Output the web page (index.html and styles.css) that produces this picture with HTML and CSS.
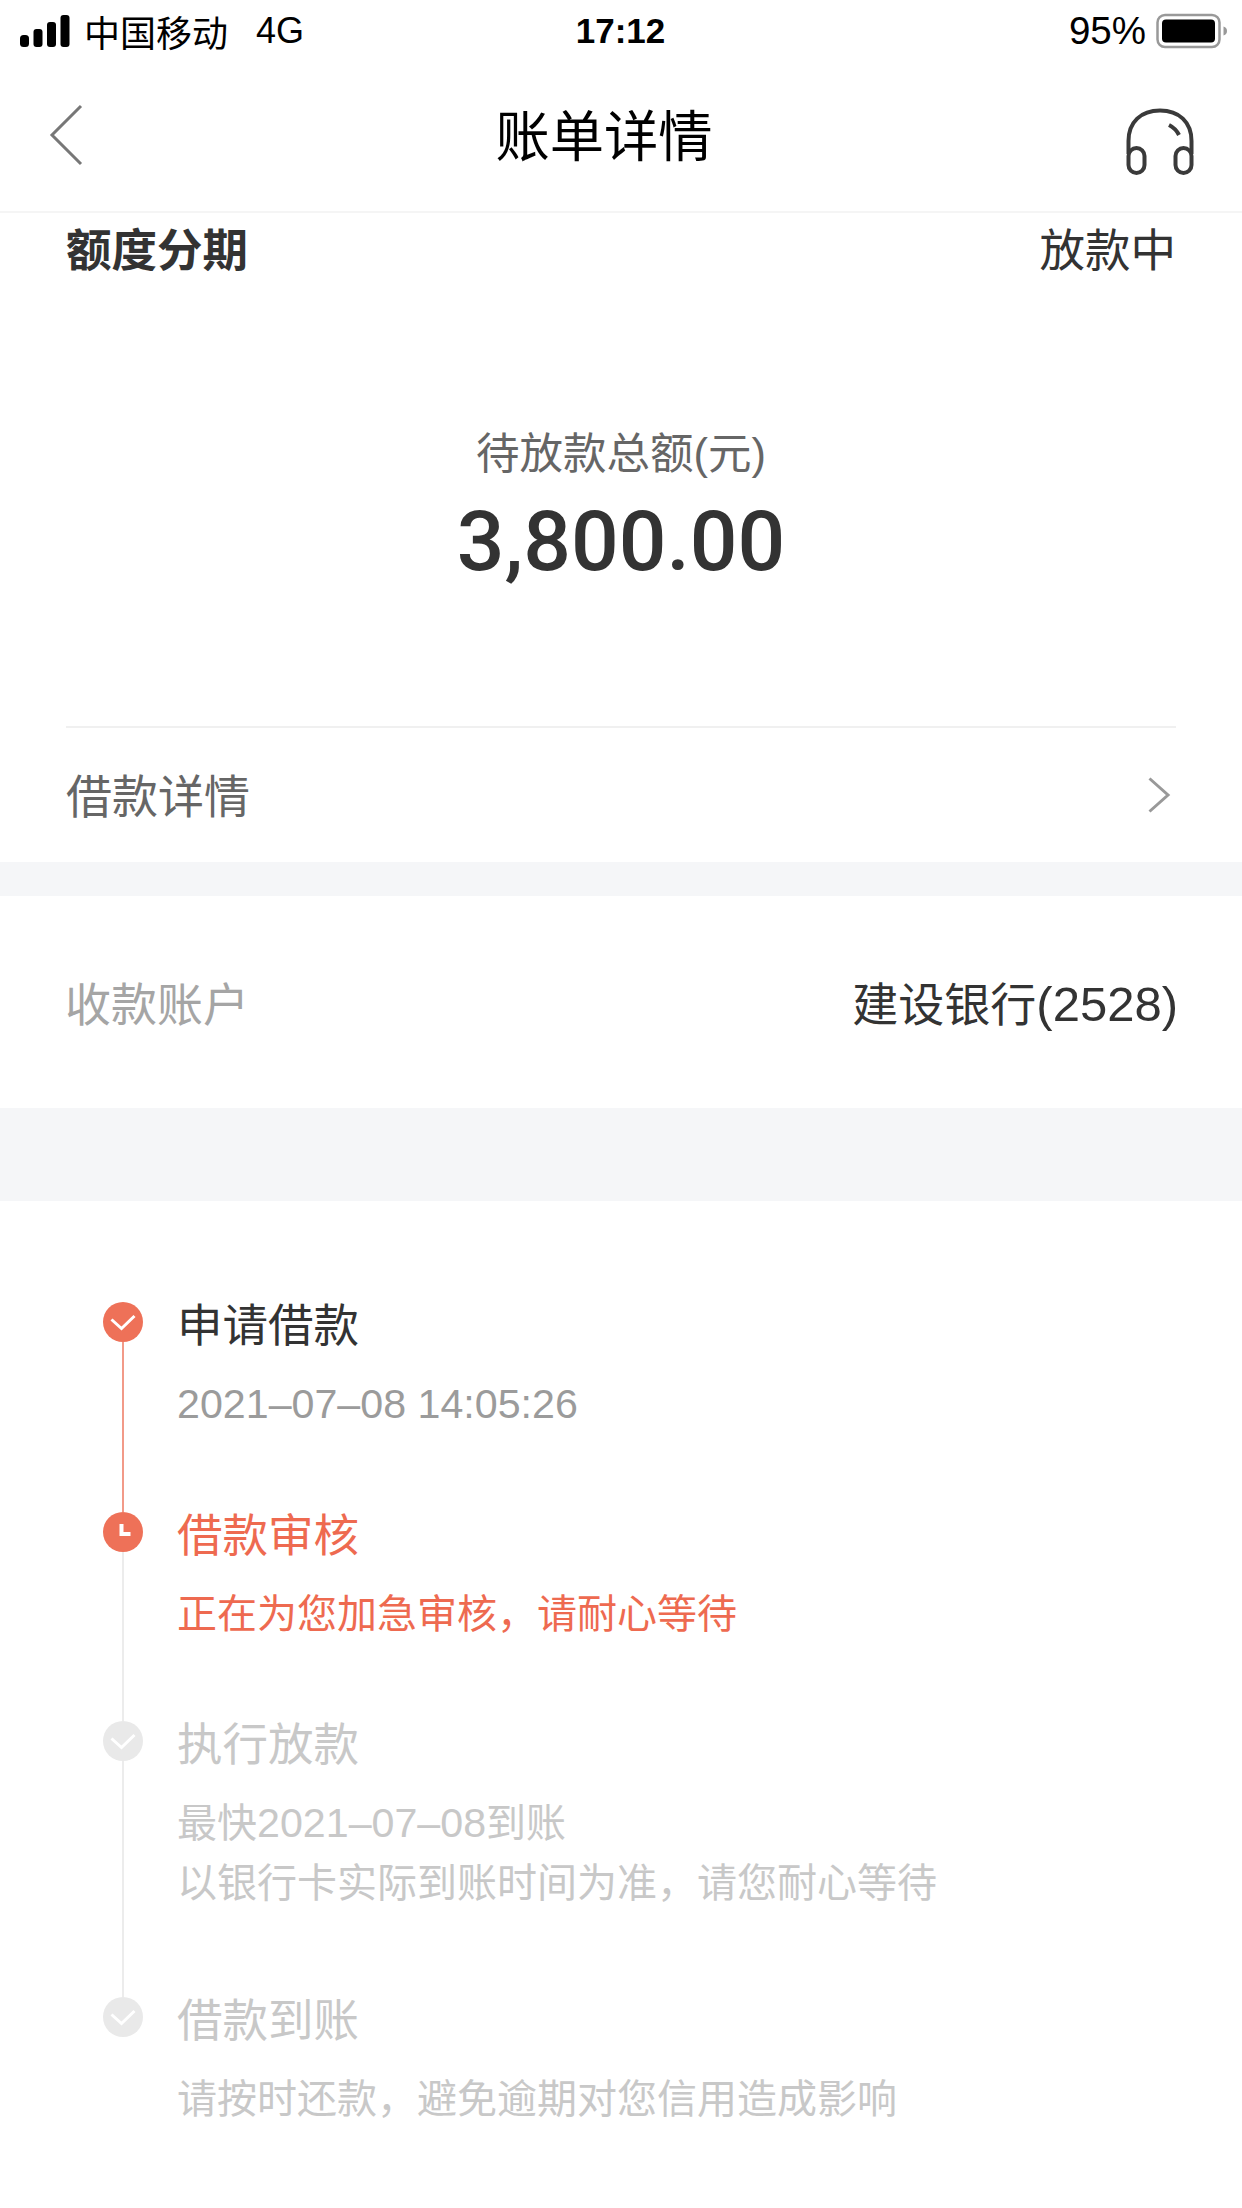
FILE: index.html
```html
<!DOCTYPE html>
<html lang="zh-CN">
<head>
  <meta charset="UTF-8" />
  <title>账单详情</title>
  <link rel="stylesheet" href="styles.css">
</head>
<body>
  <div class="status-bar">
    <div class="status-left">
      <svg class="signal" width="52" height="34" viewBox="0 0 52 34">
        <rect x="1" y="21" width="9" height="12" rx="3.5"/>
        <rect x="14.5" y="15" width="9" height="18" rx="3"/>
        <rect x="28" y="8" width="9" height="25" rx="3"/>
        <rect x="41.5" y="1" width="9" height="32" rx="3"/>
      </svg>
      <span class="carrier">中国移动</span>
      <span class="network">4G</span>
    </div>
    <div class="status-time">17:12</div>
    <div class="status-right">
      <span class="battery-text">95%</span>
      <svg class="battery" width="72" height="36" viewBox="0 0 72 36">
        <rect x="1.5" y="2" width="62" height="32" rx="7.5" fill="none" stroke="#999" stroke-width="2.5"/>
        <rect x="6" y="6.5" width="53" height="23" rx="4" fill="#000"/>
        <path d="M67.500 13.500c2.500 .8 3.500 2.500 3.500 4.500s-1 3.700-3.500 4.500z" fill="#999"/>
      </svg>
    </div>
  </div>

  <div class="nav-bar">
    <svg class="nav-back" width="34" height="62" viewBox="0 0 34 62">
      <path d="M32 2 3 31l29 29" fill="none" stroke="#777" stroke-width="3"/>
    </svg>
    <div class="nav-title">账单详情</div>
    <svg class="nav-service" width="70" height="68" viewBox="0 0 70 68">
      <path d="M3.500 46V33C3.500 14 16 2.500 35 2.500S66.500 14 66.500 33v13" fill="none" stroke="#3a3a3a" stroke-width="4"/>
      <rect x="3.500" y="40" width="16" height="25" rx="8" fill="none" stroke="#3a3a3a" stroke-width="4"/>
      <rect x="50.500" y="40" width="16" height="25" rx="8" fill="none" stroke="#3a3a3a" stroke-width="4"/>
      <path d="M44 17c4 2 8 6 10 10" fill="none" stroke="#3a3a3a" stroke-width="4"/>
    </svg>
  </div>

  <section class="summary">
    <div class="summary-head">
      <span class="summary-type">额度分期</span>
      <span class="summary-state">放款中</span>
    </div>
    <div class="summary-label">待放款总额(元)</div>
    <div class="summary-amount">3,800.00</div>
    <div class="detail-row">
      <span class="detail-label">借款详情</span>
      <svg class="chevron" width="24" height="38" viewBox="0 0 24 38">
        <path d="M2.500 2.500 21 19 2.500 35.500" fill="none" stroke="#999" stroke-width="3"/>
      </svg>
    </div>
  </section>

  <section class="account">
    <span class="account-label">收款账户</span>
    <span class="account-value">建设银行<span class="account-no">(2528)</span></span>
  </section>

  <section class="timeline">
    <div class="step step-done">
      <div class="step-mark">
        <svg class="step-dot" width="40" height="40" viewBox="0 0 40 40">
          <circle cx="20" cy="20" r="20"/>
          <path d="M8.500 17.500 18.500 26.500 31.500 14" fill="none" stroke="#fff" stroke-width="3"/>
        </svg>
        <div class="step-line"></div>
      </div>
      <div class="step-body">
        <div class="step-title">申请借款</div>
        <div class="step-text"><span class="num">2021–07–08 14:05:26</span></div>
      </div>
    </div>

    <div class="step step-active">
      <div class="step-mark">
        <svg class="step-dot" width="40" height="40" viewBox="0 0 40 40">
          <circle cx="20" cy="20" r="20"/>
          <path d="M18.500 12v10h9" fill="none" stroke="#fff" stroke-width="4"/>
        </svg>
        <div class="step-line"></div>
      </div>
      <div class="step-body">
        <div class="step-title">借款审核</div>
        <div class="step-text">正在为您加急审核，请耐心等待</div>
      </div>
    </div>

    <div class="step step-todo step-tall">
      <div class="step-mark">
        <svg class="step-dot" width="40" height="40" viewBox="0 0 40 40">
          <circle cx="20" cy="20" r="20"/>
          <path d="M8.500 17.500 18.500 26.500 31.500 14" fill="none" stroke="#fff" stroke-width="3"/>
        </svg>
        <div class="step-line"></div>
      </div>
      <div class="step-body">
        <div class="step-title">执行放款</div>
        <div class="step-text">最快<span class="num">2021–07–08</span>到账<br>以银行卡实际到账时间为准，请您耐心等待</div>
      </div>
    </div>

    <div class="step step-todo">
      <div class="step-mark">
        <svg class="step-dot" width="40" height="40" viewBox="0 0 40 40">
          <circle cx="20" cy="20" r="20"/>
          <path d="M8.500 17.500 18.500 26.500 31.500 14" fill="none" stroke="#fff" stroke-width="3"/>
        </svg>
      </div>
      <div class="step-body">
        <div class="step-title">借款到账</div>
        <div class="step-text">请按时还款，避免逾期对您信用造成影响</div>
      </div>
    </div>
  </section>
</body>
</html>
```

FILE: styles.css
```css
* {
  box-sizing: border-box;
}

body {
  margin: 0;
  width: 1242px;
  height: 2208px;
  overflow: hidden;
  background-color: #fff;
  font-family: "Liberation Sans", "Noto Sans CJK SC", sans-serif;
  color: #333;
}

.status-bar {
  display: grid;
  grid-template-columns: 1fr auto 1fr;
  align-items: center;
  height: 62px;
  padding: 0 14px 0 19px;
  color: #000;
  font-size: 36px;
}

.status-left {
  display: flex;
  align-items: center;
}

.signal {
  fill: #000;
  margin-right: 13px;
}

.carrier {
  margin-right: 28px;
}

.status-time {
  font-weight: bold;
  font-size: 35px;
  margin-right: 6px;
}

.status-right {
  display: flex;
  align-items: center;
  justify-content: flex-end;
  gap: 10px;
}

.battery-text {
  font-size: 38.500px;
}

.nav-bar {
  display: flex;
  align-items: center;
  justify-content: space-between;
  height: 151px;
  padding: 0 47px 9px 49px;
  border-bottom: 2px solid #f5f5f5;
}

.nav-back {
  margin-top: 6px;
}

.nav-title {
  font-size: 54.300px;
  color: #000;
}

.nav-service {
  margin-top: 20px;
}

.summary {
  padding: 0 66px;
}

.summary-head {
  display: flex;
  justify-content: space-between;
  align-items: center;
  height: 67px;
  font-size: 45.500px;
}

.summary-type {
  font-weight: bold;
}

.summary-label {
  margin-top: 144px;
  text-align: center;
  font-size: 43.500px;
  line-height: 60px;
  color: #666;
}

.summary-amount {
  margin-top: 3px;
  text-align: center;
  font-family: Roboto, "Liberation Sans", sans-serif;
  font-size: 84px;
  line-height: 110px;
  font-weight: 500;
}

.detail-row {
  display: flex;
  justify-content: space-between;
  align-items: center;
  margin-top: 129px;
  height: 136px;
  padding-right: 5px;
  border-top: 2px solid #f0f0f0;
  font-size: 46px;
  color: #666;
}

.detail-label {
  margin-bottom: 5px;
}

.account {
  display: flex;
  justify-content: space-between;
  align-items: center;
  height: 246px;
  padding: 0 64px 3px 65px;
  border-top: 34px solid #f5f6f8;
  font-size: 46px;
}

.account-label {
  color: #a5a5a5;
}

.account-value {
  color: #333;
}

.account-no {
  font-size: 49px;
}

.timeline {
  border-top: 93px solid #f5f6f8;
  padding: 99px 66px 0 103px;
}

.step {
  display: flex;
  gap: 34px;
  height: 209.500px;
}

.step-tall {
  height: 275.500px;
}

.step-mark {
  display: flex;
  flex-direction: column;
  align-items: center;
  width: 40px;
  flex-shrink: 0;
}

.step-dot {
  flex-shrink: 0;
  margin-top: 2px;
}

.step-line {
  flex: 1;
  width: 2px;
  margin-bottom: -2px;
}

.step-title {
  font-size: 45.500px;
  line-height: 58px;
  margin-top: -2px;
}

.step-text {
  font-size: 40px;
  line-height: 60px;
  margin-top: 18px;
}

.num {
  font-size: 41.200px;
}

.step-done .step-dot,
.step-active .step-dot {
  fill: #ee7158;
}

.step-done .step-line {
  background-color: #f29a88;
}

.step-done .step-title {
  color: #333;
}

.step-done .step-text {
  color: #9b9b9b;
}

.step-active .step-line,
.step-todo .step-line {
  background-color: #ececec;
}

.step-active .step-title,
.step-active .step-text {
  color: #ee6a50;
}

.step-todo .step-dot {
  fill: #e9e9e9;
}

.step-todo .step-title,
.step-todo .step-text {
  color: #c8c8c8;
}
```
